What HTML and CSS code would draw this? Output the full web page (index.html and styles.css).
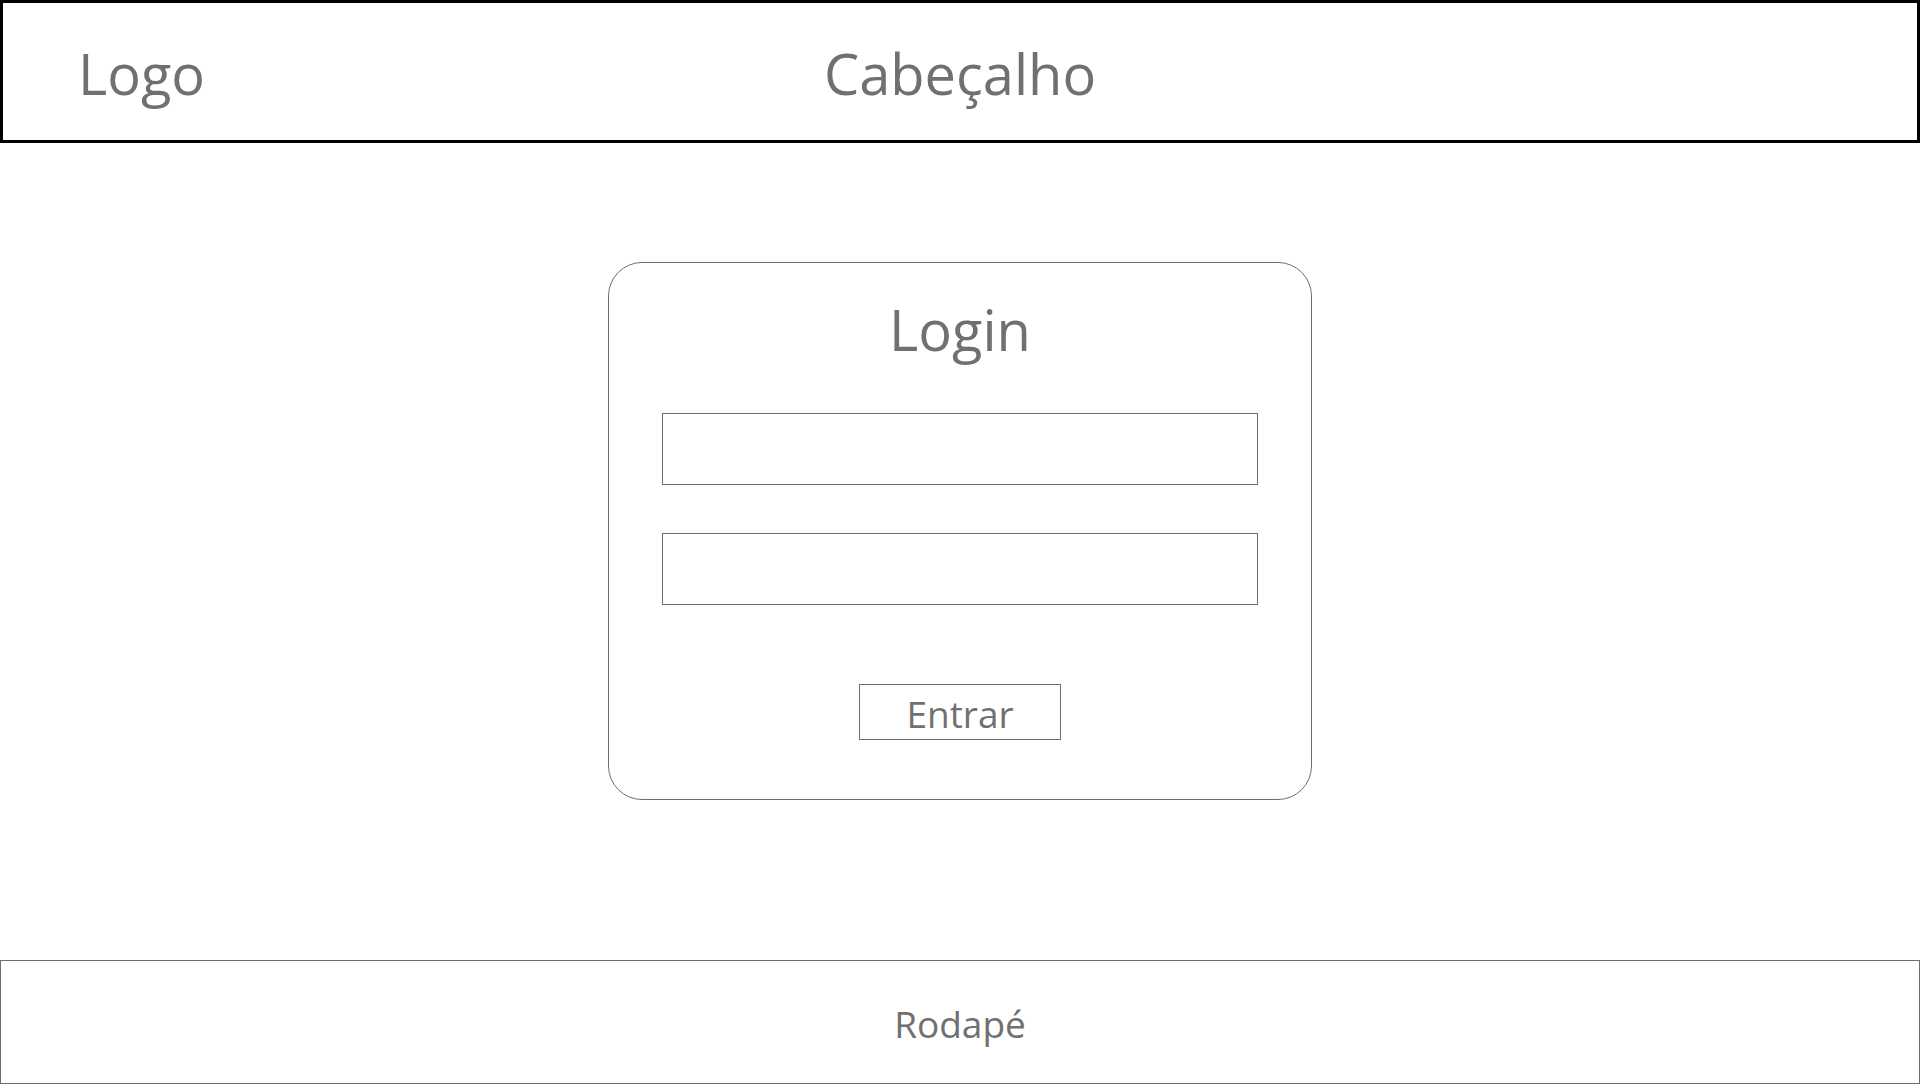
FILE: index.html
```html
<!DOCTYPE html>
<html lang="pt">
<head>
<meta charset="utf-8">
<title>Login</title>
<link rel="stylesheet" href="styles.css">
</head>
<body>
<header class="header">
  <div class="logo">Logo</div>
  <div class="title">Cabeçalho</div>
  <div></div>
</header>
<main class="main">
  <form class="card">
    <h1 class="card-title">Login</h1>
    <input class="field" type="text" aria-label="usuário">
    <input class="field" type="password" aria-label="senha">
    <button class="btn" type="button">Entrar</button>
  </form>
</main>
<footer class="footer">Rodapé</footer>
</body>
</html>
```
FILE: styles.css
```css
* { box-sizing: border-box; }
html, body { margin: 0; padding: 0; }
body {
  width: 1920px;
  height: 1084px;
  background: #fff;
  font-family: "Open Sans", "Noto Sans", sans-serif;
  color: #707070;
  display: flex;
  flex-direction: column;
  overflow: hidden;
}
.header {
  height: 143px;
  border: 3px solid #000;
  display: grid;
  grid-template-columns: 1fr auto 1fr;
  align-items: center;
  font-size: 56px;
  line-height: 1;
  padding-top: 3px;
}
.logo { padding-left: 75px; }
.title { text-align: center; }
.main {
  flex: 1;
  display: flex;
  justify-content: center;
  align-items: flex-start;
}
.card {
  margin-top: 119px;
  width: 704px;
  height: 538px;
  border: 1px solid #6e6e6e;
  border-radius: 34px;
  padding: 0 53px;
  display: flex;
  flex-direction: column;
  align-items: center;
}
.card-title {
  margin: 38px 0 0;
  font-size: 56px;
  font-weight: 400;
  line-height: 1;
  height: 112px;
}
.field {
  display: block;
  width: 596px;
  height: 72px;
  border: 1px solid #6e6e6e;
  margin: 0;
  padding: 0;
  background: #fff;
  outline: none;
}
.field + .field { margin-top: 48px; }
.btn {
  margin-top: 79px;
  width: 202px;
  height: 56px;
  border: 1px solid #6e6e6e;
  background: #fff;
  font-family: inherit;
  font-size: 37px;
  line-height: 1;
  color: #707070;
  padding: 2px 0 0;
}
.footer {
  height: 124px;
  border: 1px solid #6e6e6e;
  display: flex;
  align-items: center;
  justify-content: center;
  font-size: 37px;
  line-height: 1;
  padding-top: 2px;
}
```
